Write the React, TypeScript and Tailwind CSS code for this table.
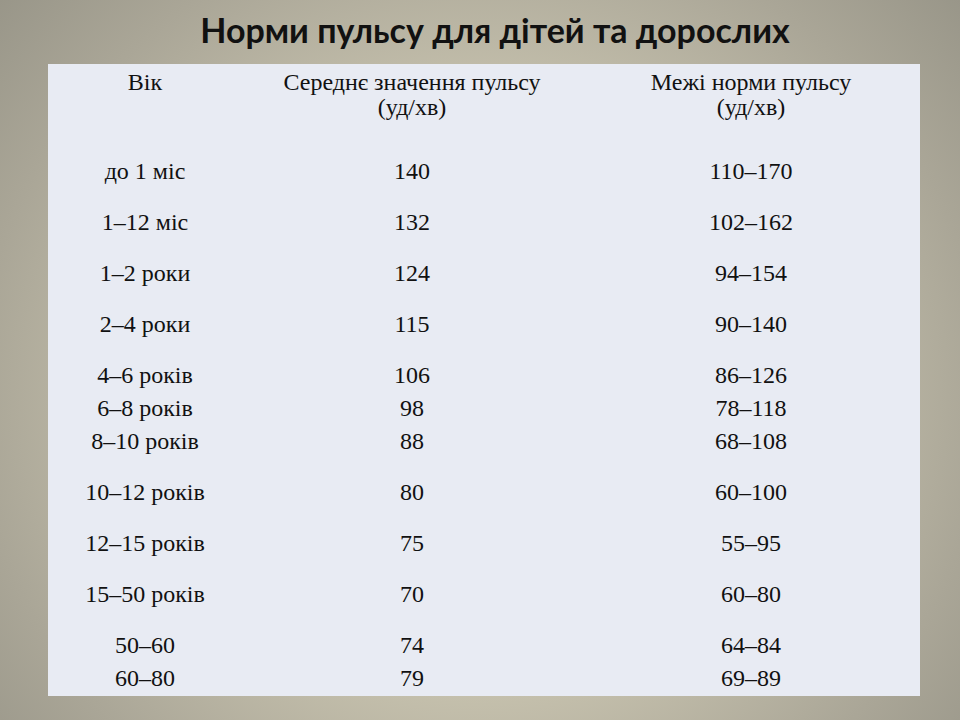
import React from "react";

type Row = { a: string[]; b: string[]; c: string[] };

const rows: Row[] = [
  { a: ["до 1 міс"], b: ["140"], c: ["110–170"] },
  { a: ["1–12 міс"], b: ["132"], c: ["102–162"] },
  { a: ["1–2 роки"], b: ["124"], c: ["94–154"] },
  { a: ["2–4 роки"], b: ["115"], c: ["90–140"] },
  { a: ["4–6 років", "6–8 років", "8–10 років"], b: ["106", "98", "88"], c: ["86–126", "78–118", "68–108"] },
  { a: ["10–12 років"], b: ["80"], c: ["60–100"] },
  { a: ["12–15 років"], b: ["75"], c: ["55–95"] },
  { a: ["15–50 років"], b: ["70"], c: ["60–80"] },
  { a: ["50–60", "60–80"], b: ["74", "79"], c: ["64–84", "69–89"] },
];

function Cell({ lines }: { lines: string[] }) {
  return (
    <div className="flex flex-col items-center">
      {lines.map((l, i) => (
        <div key={i} className="leading-[33px] whitespace-nowrap">
          {l}
        </div>
      ))}
    </div>
  );
}

export default function App() {
  return (
    <div
      className="w-[960px] h-[720px] overflow-hidden flex flex-col pl-[48px]"
      style={{
        background:
          "radial-gradient(ellipse 75% 95% at 50% 55%, #dbd7c3 0%, #cdc8b3 35%, #aaa697 70%, #8e8c80 100%)",
      }}
    >
      <h1
        className="h-[64px] pt-[10px] w-[894px] text-center text-[34px] font-bold leading-[40px] text-[#111]"
        style={{ fontFamily: "Lato, 'Open Sans', sans-serif" }}
      >
        Норми пульсу для дітей та дорослих
      </h1>
      <div
        className="w-[872px] h-[632px] bg-[#e8ebf3] text-[24px] text-[#111] overflow-hidden"
        style={{ fontFamily: "'Liberation Serif', 'Times New Roman', serif" }}
      >
        <div className="grid grid-cols-[194px_340px_338px] pt-[6px] h-[82px] leading-[25px]">
          <div className="text-center">Вік</div>
          <div className="text-center">
            <div className="whitespace-nowrap">Середнє значення пульсу</div>
            <div>(уд/хв)</div>
          </div>
          <div className="text-center">
            <div>Межі норми пульсу</div>
            <div>(уд/хв)</div>
          </div>
        </div>
        {rows.map((r, i) => (
          <div
            key={i}
            className="grid grid-cols-[194px_340px_338px] py-[9px]"
          >
            <Cell lines={r.a} />
            <Cell lines={r.b} />
            <Cell lines={r.c} />
          </div>
        ))}
      </div>
    </div>
  );
}
